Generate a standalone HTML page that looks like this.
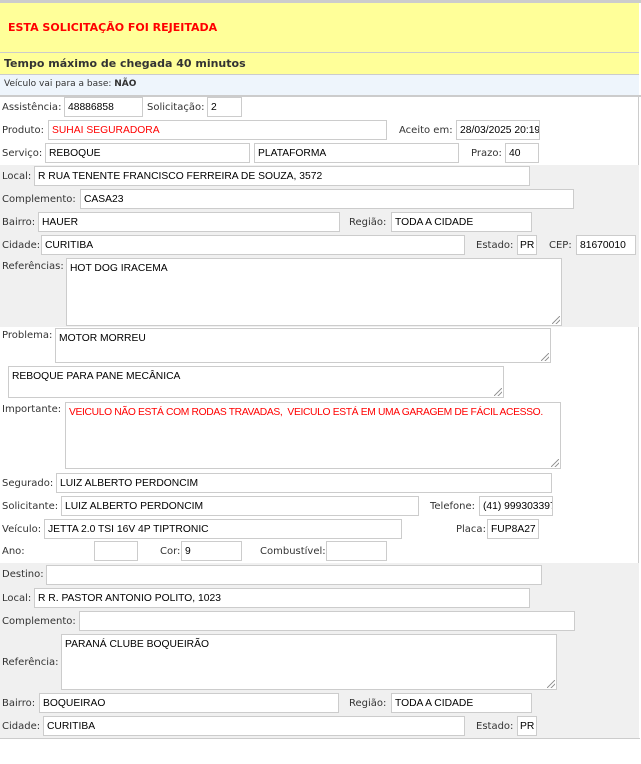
<!DOCTYPE html>
<html><head><meta charset="utf-8"><style>
*{box-sizing:border-box;margin:0;padding:0}
body{width:641px;height:764px;background:#fff;position:relative;overflow:hidden;font-family:"DejaVu Sans",Verdana,sans-serif;font-size:10px;color:#333}
.a{position:absolute}
.l{position:absolute;font-size:10px;color:#333;white-space:nowrap;line-height:12px}
.i{position:absolute;height:20px;border:1px solid #ccc;background:#fff;font-family:"Liberation Sans",Arial,sans-serif;font-size:10.3px;color:#000;padding:0 3px;line-height:19px;white-space:nowrap;overflow:hidden}
.t{line-height:14px;padding-top:3px;white-space:normal}
.r{color:#f00}
.g{position:absolute;left:0;width:639px;background:#f0f0f0}
.rs{position:absolute;right:1px;bottom:1px;width:8px;height:8px;background:linear-gradient(135deg,transparent 45%,#999 45%,#999 55%,transparent 55%,transparent 70%,#999 70%,#999 80%,transparent 80%)}
</style></head><body>
<div class="a" style="left:0;top:0;width:641px;height:3px;background:#ccc"></div>
<div class="a" style="left:0;top:3px;width:639px;height:50px;background:#ffff99;border-bottom:1px solid #ccc"></div>
<div class="a" style="left:8px;top:21px;font-size:11px;font-weight:bold;color:#f00">ESTA SOLICITAÇÃO FOI REJEITADA</div>
<div class="a" style="left:0;top:53px;width:639px;height:22px;background:#ffff99;border-bottom:1px solid #ccc"></div>
<div class="a" style="left:4px;top:57px;font-size:11px;font-weight:bold;color:#333">Tempo máximo de chegada 40 minutos</div>
<div class="a" style="left:0;top:75px;width:639px;height:20px;background:#eef5fc"></div>
<div class="a" style="left:4px;top:79px;font-size:9px;color:#333">Veículo vai para a base: <b>NÃO</b></div>
<div class="a" style="left:0;top:95px;width:641px;height:2px;background:#ccc"></div>
<div class="a" style="left:638px;top:97px;width:1px;height:642px;background:#ccc"></div>
<div class="g" style="top:165px;height:162px"></div>
<div class="g" style="top:563px;height:175px"></div>
<div class="a" style="left:0;top:738px;width:640px;height:1px;background:#ccc"></div>

<div class="l" style="left:2px;top:102px">Assistência:</div><div class="i" style="left:64px;top:97px;width:79px">48886858</div>
<div class="l" style="left:147px;top:102px">Solicitação:</div><div class="i" style="left:207px;top:97px;width:35px">2</div>
<div class="l" style="left:2px;top:125px">Produto:</div><div class="i r" style="left:48px;top:120px;width:339px">SUHAI SEGURADORA</div>
<div class="l" style="left:399px;top:125px">Aceito em:</div><div class="i" style="left:456px;top:120px;width:84px;padding:0 3px">28/03/2025 20:19</div>
<div class="l" style="left:2px;top:148px">Serviço:</div><div class="i" style="left:45px;top:143px;width:205px">REBOQUE</div>
<div class="i" style="left:254px;top:143px;width:205px">PLATAFORMA</div>
<div class="l" style="left:471px;top:148px">Prazo:</div><div class="i" style="left:505px;top:143px;width:34px">40</div>

<div class="l" style="left:2px;top:171px">Local:</div><div class="i" style="left:34px;top:166px;width:496px">R RUA TENENTE FRANCISCO FERREIRA DE SOUZA, 3572</div>
<div class="l" style="left:2px;top:194px">Complemento:</div><div class="i" style="left:80px;top:189px;width:494px">CASA23</div>
<div class="l" style="left:2px;top:217px">Bairro:</div><div class="i" style="left:38px;top:212px;width:302px">HAUER</div>
<div class="l" style="left:349px;top:217px">Região:</div><div class="i" style="left:391px;top:212px;width:141px">TODA A CIDADE</div>
<div class="l" style="left:2px;top:240px">Cidade:</div><div class="i" style="left:41px;top:235px;width:424px">CURITIBA</div>
<div class="l" style="left:476px;top:240px">Estado:</div><div class="i" style="left:517px;top:235px;width:20px;padding:0 2px">PR</div>
<div class="l" style="left:549px;top:240px">CEP:</div><div class="i" style="left:576px;top:235px;width:60px">81670010</div>
<div class="l" style="left:2px;top:261px">Referências:</div><div class="i t" style="left:66px;top:258px;width:496px;height:68px">HOT DOG IRACEMA<div class="rs"></div></div>

<div class="l" style="left:2px;top:330px">Problema:</div><div class="i t" style="left:55px;top:328px;width:496px;height:35px">MOTOR MORREU<div class="rs"></div></div>
<div class="i t" style="left:8px;top:366px;width:496px;height:32px">REBOQUE PARA PANE MECÂNICA<div class="rs"></div></div>
<div class="l" style="left:2px;top:404px">Importante:</div><div class="i t r" style="left:65px;top:402px;width:496px;height:67px;white-space:nowrap;letter-spacing:-0.35px">VEICULO NÃO ESTÁ COM RODAS TRAVADAS,&nbsp; VEICULO ESTÁ EM UMA GARAGEM DE FÁCIL ACESSO.<div class="rs"></div></div>
<div class="l" style="left:2px;top:478px">Segurado:</div><div class="i" style="left:56px;top:473px;width:496px">LUIZ ALBERTO PERDONCIM</div>
<div class="l" style="left:2px;top:501px">Solicitante:</div><div class="i" style="left:61px;top:496px;width:358px">LUIZ ALBERTO PERDONCIM</div>
<div class="l" style="left:430px;top:501px">Telefone:</div><div class="i" style="left:479px;top:496px;width:74px;padding:0 3px">(41) 999303397</div>
<div class="l" style="left:2px;top:524px">Veículo:</div><div class="i" style="left:44px;top:519px;width:358px">JETTA 2.0 TSI 16V 4P TIPTRONIC</div>
<div class="l" style="left:456px;top:524px">Placa:</div><div class="i" style="left:487px;top:519px;width:52px">FUP8A27</div>
<div class="l" style="left:2px;top:546px">Ano:</div><div class="i" style="left:94px;top:541px;width:44px"></div>
<div class="l" style="left:160px;top:546px">Cor:</div><div class="i" style="left:181px;top:541px;width:61px">9</div>
<div class="l" style="left:260px;top:546px">Combustível:</div><div class="i" style="left:326px;top:541px;width:61px"></div>

<div class="l" style="left:2px;top:569px">Destino:</div><div class="i" style="left:46px;top:565px;width:496px"></div>
<div class="l" style="left:2px;top:593px">Local:</div><div class="i" style="left:34px;top:588px;width:496px">R R. PASTOR ANTONIO POLITO, 1023</div>
<div class="l" style="left:2px;top:616px">Complemento:</div><div class="i" style="left:79px;top:611px;width:496px"></div>
<div class="l" style="left:2px;top:657px">Referência:</div><div class="i t" style="left:61px;top:634px;width:496px;height:56px">PARANÁ CLUBE BOQUEIRÃO<div class="rs"></div></div>
<div class="l" style="left:2px;top:698px">Bairro:</div><div class="i" style="left:39px;top:693px;width:300px">BOQUEIRAO</div>
<div class="l" style="left:349px;top:698px">Região:</div><div class="i" style="left:391px;top:693px;width:141px">TODA A CIDADE</div>
<div class="l" style="left:2px;top:721px">Cidade:</div><div class="i" style="left:43px;top:716px;width:422px">CURITIBA</div>
<div class="l" style="left:476px;top:721px">Estado:</div><div class="i" style="left:517px;top:716px;width:20px;padding:0 2px">PR</div>
</body></html>
